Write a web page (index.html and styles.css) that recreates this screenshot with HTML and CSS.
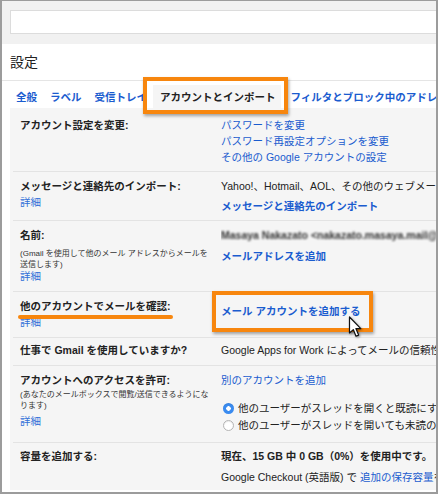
FILE: index.html
```html
<!DOCTYPE html>
<html lang="ja">
<head>
<meta charset="utf-8">
<title>設定</title>
<link rel="stylesheet" href="styles.css">
</head>
<body>
<div class="frame">
  <header class="topbar"><div class="search"></div></header>
  <h1 class="title">設定</h1>
  <nav class="tabs">
    <a class="tab">全般</a>
    <a class="tab">ラベル</a>
    <a class="tab">受信トレイ</a>
    <span class="tab active">アカウントとインポート</span>
    <a class="tab">フィルタとブロック中のアドレス</a>
  </nav>
  <main class="content">
    <section class="row r1">
      <div class="label"><div class="head">アカウント設定を変更:</div></div>
      <div class="value">
        <a class="link">パスワードを変更</a>
        <a class="link">パスワード再設定オプションを変更</a>
        <a class="link">その他の Google アカウントの設定</a>
      </div>
    </section>
    <section class="row r2">
      <div class="label">
        <div class="head">メッセージと連絡先のインポート:</div>
        <a class="more">詳細</a>
      </div>
      <div class="value">
        <div class="text">Yahoo!、Hotmail、AOL、その他のウェブメールや POP3 アカウントからインポートします。</div>
        <a class="link strong gap4">メッセージと連絡先のインポート</a>
      </div>
    </section>
    <section class="row r3">
      <div class="label">
        <div class="head">名前:</div>
        <div class="note gap5">(Gmail を使用して他のメール アドレスからメールを<br>送信します)</div>
        <a class="more tight">詳細</a>
      </div>
      <div class="value">
        <div class="text blurred">Masaya Nakazato &lt;nakazato.masaya.mail@gmail.com&gt;</div>
        <a class="link strong gap5">メールアドレスを追加</a>
      </div>
    </section>
    <section class="row r4">
      <div class="label">
        <div class="head">他のアカウントでメールを確認:</div>
        <a class="more">詳細</a>
      </div>
      <div class="value">
        <a class="link strong gap5">メール アカウントを追加する</a>
      </div>
    </section>
    <section class="row r5">
      <div class="label"><div class="head">仕事で Gmail を使用していますか?</div></div>
      <div class="value">
        <div class="text">Google Apps for Work によってメールの信頼性を高めましょう。</div>
      </div>
    </section>
    <section class="row r6">
      <div class="label">
        <div class="head">アカウントへのアクセスを許可:</div>
        <div class="note gap1">(あなたのメールボックスで閲覧/送信できるようにな<br>ります)</div>
        <a class="more gap2">詳細</a>
      </div>
      <div class="value">
        <a class="link">別のアカウントを追加</a>
        <div class="radio-line first"><span class="radio on"></span><span class="text">他のユーザーがスレッドを開くと既読にする</span></div>
        <div class="radio-line"><span class="radio"></span><span class="text">他のユーザーがスレッドを開いても未読のままにする</span></div>
      </div>
    </section>
    <section class="row r7">
      <div class="label"><div class="head">容量を追加する:</div></div>
      <div class="value">
        <div class="text strong">現在、15 GB 中 0 GB（0%）を使用中です。</div>
        <div class="text gap5">Google Checkout (英語版) で <a class="link inline">追加の保存容量</a>を購入できます。</div>
      </div>
    </section>
  </main>

  <div class="callout callout-tab"></div>
  <div class="callout callout-add"></div>
  <div class="underline"></div>
  <svg class="cursor" width="14" height="22" viewBox="0 0 14 22">
    <path d="M1.5 1 L1.5 17 L5.3 13.6 L8 20.2 L10.6 19.1 L7.9 12.6 L12.8 12.6 Z" fill="#fff" stroke="#111" stroke-width="1.2" stroke-linejoin="round"/>
  </svg>
</div>
</body>
</html>
```

FILE: styles.css
```css
* { box-sizing: border-box; }

html, body {
  margin: 0;
  padding: 0;
  background: #fff;
}

body {
  font-family: "Liberation Sans", "Noto Sans CJK JP", sans-serif;
  font-size: 10.5px;
  color: #222;
}

.frame {
  position: relative;
  width: 438px;
  height: 494px;
  border: 2px solid #9c9c9c;
  border-top-width: 1px;
  overflow: hidden;
  display: flex;
  flex-direction: column;
  background: #fff;
}

.topbar {
  height: 43px;
  flex: none;
  background: #f1f1f1;
  padding: 9px 0 0 8px;
}

.search {
  height: 24px;
  margin-right: -20px;
  background: #fff;
  border: 1px solid #dcdcdc;
}

.title {
  margin: 0;
  flex: none;
  height: 37px;
  line-height: 36px;
  padding-left: 8px;
  font-size: 14px;
  font-weight: normal;
  color: #222;
  border-bottom: 1px solid #e5e5e5;
}

.tabs {
  flex: none;
  height: 27px;
  display: flex;
  align-items: flex-end;
  padding-left: 14px;
  white-space: nowrap;
}

.tab {
  height: 23px;
  padding-top: 1px;
  line-height: 22px;
  margin-right: 13px;
  font-weight: bold;
  color: #1a5ccf;
  flex: none;
}

.tab.active {
  background: #f5f5f5;
  color: #222;
  margin-left: -7px;
  margin-right: 10px;
  padding-left: 7px;
  padding-right: 5px;
}

.content {
  flex: 1;
  margin-left: 8px;
  margin-bottom: 2px;
  background: #f5f5f5;
  display: flex;
  flex-direction: column;
}

.row {
  display: grid;
  grid-template-columns: 201px 1fr;
  margin-left: 3px;
  padding-left: 7px;
  padding-top: 6px;
  border-bottom: 1px solid #e3e3e3;
  line-height: 16px;
  flex: none;
}

.r1 { height: 64px; padding-top: 9px; }
.r2 { height: 49px; }
.r3 { height: 71px; }
.r4 { height: 46px; }
.r5 { height: 28px; padding-top: 4px; }
.r6 { height: 77px; }
.r7 { flex: 1; border-bottom: none; padding-top: 5px; }

.label { min-width: 0; }

.value {
  min-width: 0;
  overflow: hidden;
  white-space: nowrap;
}

.head {
  font-weight: bold;
  white-space: nowrap;
}

.note {
  font-size: 8px;
  line-height: 11px;
  color: #333;
  white-space: nowrap;
}

.more {
  display: block;
  color: #2f6fd8;
}

.more.tight { line-height: 13px; }

.link {
  display: block;
  color: #1a5ccf;
  text-decoration: none;
}

.link.inline { display: inline; }

.strong { font-weight: bold; }

.text { color: #222; }

.blurred {
  color: #333;
  font-weight: bold;
  filter: blur(1.1px);
}

.gap1 { margin-top: 1px; }
.gap2 { margin-top: 2px; }
.gap4 { margin-top: 4px; }
.gap5 { margin-top: 5px; }

.radio-line {
  display: flex;
  align-items: center;
  gap: 4px;
  margin-top: 1px;
  margin-left: 2px;
}

.radio-line.first { margin-top: 12px; }

.radio {
  width: 11px;
  height: 11px;
  border-radius: 50%;
  flex: none;
  background: #fff;
  border: 1px solid #b4b4b4;
  box-shadow: inset 0 1px 1px rgba(0,0,0,0.08);
}

.radio.on {
  border: none;
  background: radial-gradient(circle, #fff 0 2px, #3a8bf0 2.5px);
}

.callout {
  position: absolute;
  border: 4px solid #f7860e;
  box-shadow: 1px 2px 3px rgba(0,0,0,0.35);
}

.callout-tab {
  left: 141px;
  top: 76px;
  width: 145px;
  height: 37px;
}

.callout-add {
  left: 210px;
  top: 290px;
  width: 161px;
  height: 41px;
}

.underline {
  position: absolute;
  left: 16px;
  top: 314px;
  width: 155px;
  height: 4px;
  border-radius: 2px;
  background: #f7860e;
}

.cursor {
  position: absolute;
  left: 346px;
  top: 315px;
  filter: drop-shadow(1px 1px 1px rgba(0,0,0,0.4));
}
```
